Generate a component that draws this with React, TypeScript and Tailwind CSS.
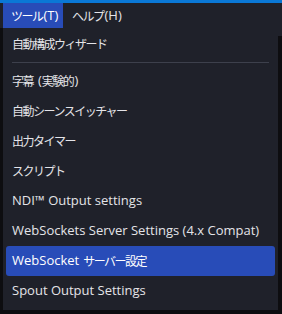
import type { ReactNode } from 'react';

const font = { fontFamily: '"Open Sans", "Noto Sans CJK JP", sans-serif' };

// Japanese runs are set a bit tighter than the latin text
const J = ({ children }: { children: ReactNode }) => (
  <span className="text-[12px] tracking-[-1.5px]" style={{ fontFamily: '"Noto Sans CJK JP", sans-serif' }}>
    {children}
  </span>
);

const items: ReactNode[] = [
  <>
    <J>字幕</J>
    <span className="pl-[5px]">(</span>
    <J>実験的</J>
    <span className="pl-[1px]">)</span>
  </>,
  <J>自動シーンスイッチャー</J>,
  <J>出力タイマー</J>,
  <J>スクリプト</J>,
  'NDI™ Output settings',
  'WebSockets Server Settings (4.x Compat)',
  <>
    <span className="pr-[4px]">WebSocket</span>
    <J>サーバー設定</J>
  </>,
  'Spout Output Settings',
];

export default function App() {
  return (
    <div className="w-[282px] h-[314px] flex flex-col bg-[#0d0d10] text-[13px] text-[#e4e4e8] overflow-hidden whitespace-nowrap" style={font}>
      <div className="h-[3px] bg-[#0a78d6]" />
      {/* menu bar */}
      <div className="h-[25px] flex items-stretch bg-[#1f212a]">
        <div className="ml-[3px] w-[60px] flex items-center pl-[8px] bg-[#284cb8] text-white">
          <J>ツール</J>
          <span className="pl-[1px]">(T)</span>
        </div>
        <div className="flex items-center pl-[9px]">
          <J>ヘルプ</J>
          <span className="pl-[1px]">(H)</span>
        </div>
      </div>
      <div className="flex-1 flex">
        <div className="w-[3px]" />
        {/* dropdown */}
        <div className="w-[275px] bg-[#1f212a] flex flex-col px-[3px] pt-[1px]">
          <div className="h-[30px] flex items-center px-[6px]">
            <J>自動構成ウィザード</J>
          </div>
          <div className="h-[7px] pt-[3px] px-[6px]">
            <div className="h-px w-full bg-[#3d404c]" />
          </div>
          {items.map((label, i) => (
            <div
              key={i}
              className={
                i === 6
                  ? 'h-[30px] flex items-center px-[6px] rounded-[3px] bg-[#284cb8] text-white'
                  : 'h-[30px] flex items-center px-[6px]'
              }
            >
              {label}
            </div>
          ))}
        </div>
        <div className="flex-1 flex flex-col">
          <div className="h-[8px] bg-[#1f212a]" />
        </div>
      </div>
      <div className="h-[4px]" />
    </div>
  );
}
